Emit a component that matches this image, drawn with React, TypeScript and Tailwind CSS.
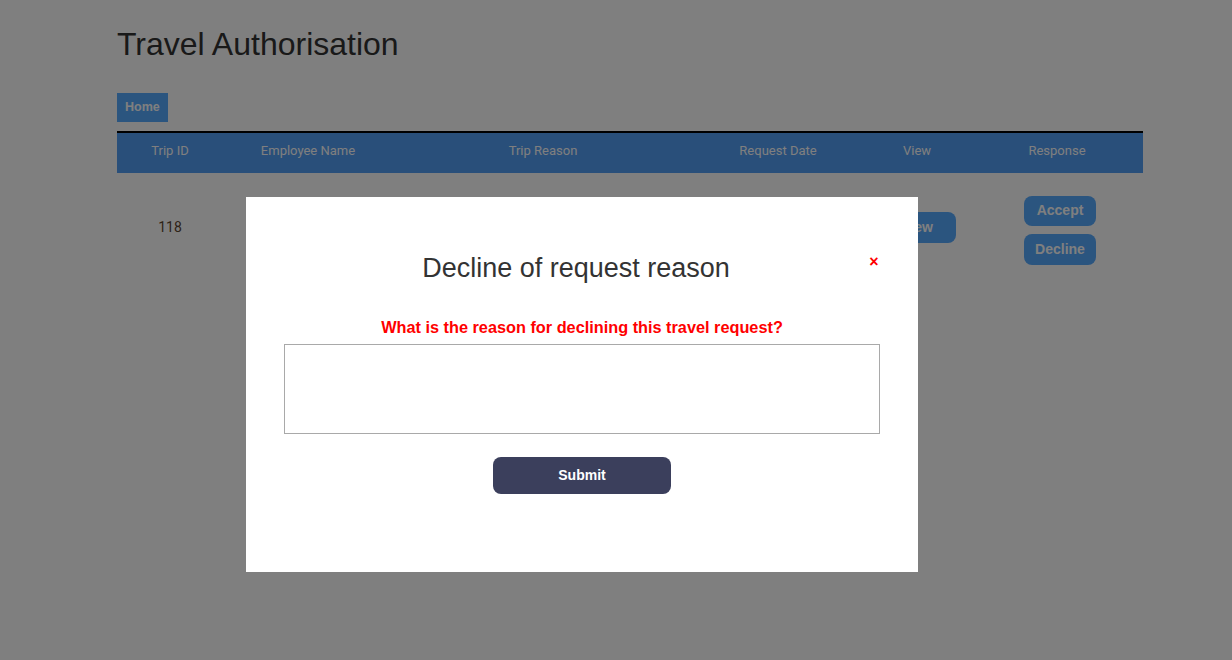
import React from 'react';

// Colonnes du tableau (largeurs relevées sur la capture)
const COLUMNS = [
  { label: 'Trip ID', width: 'w-[106px]' },
  { label: 'Employee Name', width: 'w-[170px]' },
  { label: 'Trip Reason', width: 'w-[300px]' },
  { label: 'Request Date', width: 'w-[170px]' },
  { label: 'View', width: 'w-[108px]' },
  { label: 'Response', width: 'w-[172px]' },
];

const DeclineModal: React.FC = () => (
  <div className="fixed inset-0 bg-black/50">
    <div className="absolute left-[246px] top-[197px] w-[672px] h-[375px] bg-white px-[38px] pt-[55px] font-['Liberation_Sans',Arial,sans-serif]">
      <div className="flex items-center">
        <h2 className="flex-1 text-center text-[27px] leading-[32px] text-[#333]">Decline of request reason</h2>
        <button className="w-[12px] text-[16px] font-bold leading-none text-[#ff0000] -mt-[12px]">×</button>
      </div>
      <p className="mt-[33px] text-center text-[16.3px] font-bold text-[#ff0000] leading-[20px]">
        What is the reason for declining this travel request?
      </p>
      <textarea className="mt-[7px] block w-full h-[90px] border border-[#a9a9a9] resize-none outline-none" />
      <div className="flex justify-center mt-[23px]">
        <button className="w-[178px] h-[37px] rounded-[8px] bg-[#3b3f5c] text-white text-[14px] font-bold">Submit</button>
      </div>
    </div>
  </div>
);

export default function App() {
  return (
    <div className="min-h-[660px] bg-white font-['Liberation_Sans',Arial,sans-serif]">
      <div className="w-[1026px] ml-[117px] pt-[25px]">
        <h1 className="text-[32px] leading-[38px] text-[#333]">Travel Authorisation</h1>

        <div className="mt-[30px] flex">
          <button className="h-[29px] px-[8px] bg-[#56aaff] text-white text-[12.5px] font-bold">Home</button>
        </div>

        <div className="mt-[9px] border-t-2 border-black">
          <div className="flex h-[40px] pb-[4px] items-center bg-[#529ef4] font-['Roboto',sans-serif] text-[13px] text-white">
            {COLUMNS.map((c) => (
              <div key={c.label} className={`${c.width} text-center`}>{c.label}</div>
            ))}
          </div>
          <div className="flex h-[108px] items-center text-[14px]">
            <div className="w-[106px] text-center text-[#5c4630] font-['Roboto',sans-serif]">118</div>
            <div className="w-[170px]" />
            <div className="w-[300px]" />
            <div className="w-[170px]" />
            <div className="w-[108px] flex justify-center">
              <button className="w-[78px] h-[31px] rounded-[8px] bg-[#56aaff] text-white font-bold">View</button>
            </div>
            <div className="w-[172px] flex flex-col items-center gap-[8px] pl-[6px] pt-[6px]">
              <button className="w-[72px] h-[30px] rounded-[8px] bg-[#56aaff] text-white font-bold">Accept</button>
              <button className="w-[72px] h-[31px] rounded-[8px] bg-[#56aaff] text-white font-bold">Decline</button>
            </div>
          </div>
        </div>
      </div>
      <DeclineModal />
    </div>
  );
}
